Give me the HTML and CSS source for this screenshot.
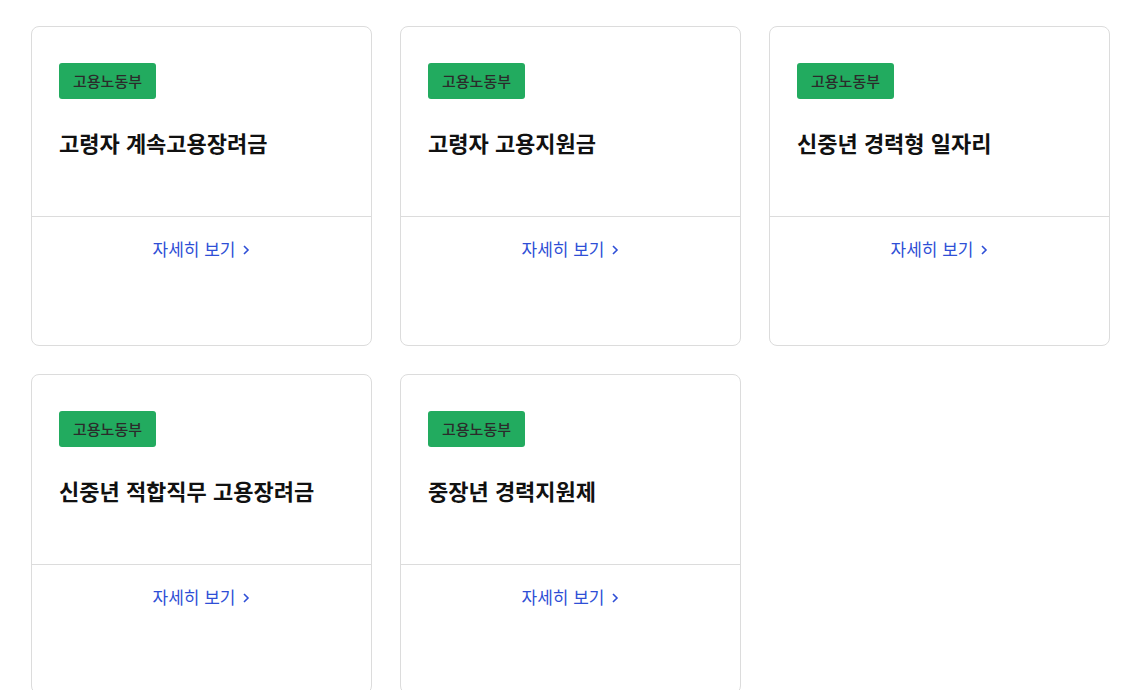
FILE: index.html
```html
<!DOCTYPE html>
<html lang="ko">
<head>
<meta charset="utf-8">
<link rel="stylesheet" href="styles.css">
</head>
<body>
<div class="grid">
  <div class="card">
    <div class="card-body">
      <span class="badge">고용노동부</span>
      <h3 class="title">고령자 계속고용장려금</h3>
    </div>
    <div class="card-foot"><a class="more" href="#">자세히 보기 <svg class="chev" viewBox="0 0 8 12" width="8" height="12"><path d="M2 2l4 4-4 4" fill="none" stroke="currentColor" stroke-width="1.6"/></svg></a></div>
  </div>
  <div class="card">
    <div class="card-body">
      <span class="badge">고용노동부</span>
      <h3 class="title">고령자 고용지원금</h3>
    </div>
    <div class="card-foot"><a class="more" href="#">자세히 보기 <svg class="chev" viewBox="0 0 8 12" width="8" height="12"><path d="M2 2l4 4-4 4" fill="none" stroke="currentColor" stroke-width="1.6"/></svg></a></div>
  </div>
  <div class="card">
    <div class="card-body">
      <span class="badge">고용노동부</span>
      <h3 class="title">신중년 경력형 일자리</h3>
    </div>
    <div class="card-foot"><a class="more" href="#">자세히 보기 <svg class="chev" viewBox="0 0 8 12" width="8" height="12"><path d="M2 2l4 4-4 4" fill="none" stroke="currentColor" stroke-width="1.6"/></svg></a></div>
  </div>
  <div class="card">
    <div class="card-body">
      <span class="badge">고용노동부</span>
      <h3 class="title">신중년 적합직무 고용장려금</h3>
    </div>
    <div class="card-foot"><a class="more" href="#">자세히 보기 <svg class="chev" viewBox="0 0 8 12" width="8" height="12"><path d="M2 2l4 4-4 4" fill="none" stroke="currentColor" stroke-width="1.6"/></svg></a></div>
  </div>
  <div class="card">
    <div class="card-body">
      <span class="badge">고용노동부</span>
      <h3 class="title">중장년 경력지원제</h3>
    </div>
    <div class="card-foot"><a class="more" href="#">자세히 보기 <svg class="chev" viewBox="0 0 8 12" width="8" height="12"><path d="M2 2l4 4-4 4" fill="none" stroke="currentColor" stroke-width="1.6"/></svg></a></div>
  </div>
</div>
</body>
</html>
```
FILE: styles.css
```css
* { box-sizing: border-box; }
body {
  margin: 0;
  padding: 26px 12px 0 31px;
  background: #fff;
  font-family: "Noto Sans CJK KR", "Noto Sans", sans-serif;
  color: #111;
}
.grid {
  display: grid;
  grid-template-columns: repeat(3, 1fr);
  column-gap: 28px;
  row-gap: 28px;
}
.card {
  border: 1px solid #dcdcdc;
  border-radius: 8px;
  background: #fff;
  display: flex;
  flex-direction: column;
}
.card-body {
  height: 190px;
  padding: 36px 27px 0 27px;
  border-bottom: 1px solid #dcdcdc;
}
.badge {
  display: inline-block;
  height: 36px;
  line-height: 36px;
  padding: 0 14px;
  background: #22ab5f;
  color: #2b2b2b;
  font-size: 15px;
  font-weight: 500;
  border-radius: 3px;
}
.title {
  margin: 28px 0 0 0;
  font-size: 22px;
  line-height: 30px;
  font-weight: 600;
  color: #111;
}
.card-foot {
  height: 128px;
  padding-top: 20px;
  text-align: center;
}
.more {
  color: #2f4fd6;
  font-size: 17px;
  line-height: 24px;
  text-decoration: none;
  display: inline-flex;
  align-items: center;
  gap: 7px;
}
.chev { display: block; margin-top: 2px; }
```
